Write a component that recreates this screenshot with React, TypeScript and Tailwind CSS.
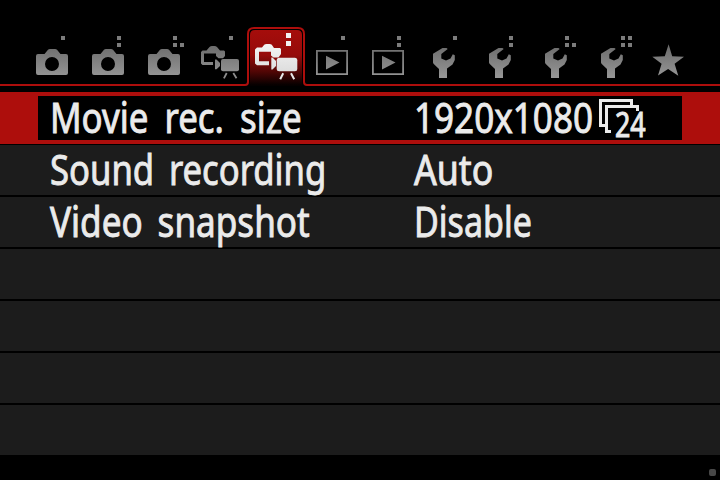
import type { ReactNode } from 'react';

function Camera() {
  return (
    <path
      fillRule="evenodd"
      d="M14 54H20.500L24 49.800Q24.600 49 26 49H31Q32.400 49 33 49.800L36.500 54H42Q44 54 44 56V73Q44 75 42 75H14Q12 75 12 73V56Q12 54 14 54ZM28 57A7 7 0 1 0 28 71A7 7 0 1 0 28 57Z"
    />
  );
}

function MovieCamera() {
  return (
    <>
      <path d="M10.500 50.500H14.500L17.500 47Q18.500 46 20 46H22.500Q24 46 25 47L28 50.500H32L33 51.500V56L31 58.300H26.500L24 56V53.500H12V62H21V65H10.500L9 63.500V52Z" />
      <path d="M23 59.500H24.500L28 63V66L24.500 69.300H23Z" />
      <rect x="29" y="59" width="18" height="12.300" rx="2" />
      <path d="M34.700 73L31.900 78.300M41.300 73L44.500 78.300" stroke="#8d8d8d" strokeWidth="1.800" />
    </>
  );
}

function ActiveMovieCamera() {
  return (
    <>
      <path d="M9 47.500H14L16.200 44.800Q17 44 18.500 44H21.500Q23 44 23.800 44.800L26 48H32L33 49V54L30.500 57.500H25.500L23 55.500V51.700H11V61.300H21V65.300H9L7 63.500V49.500Z" />
      <path d="M23.300 57.500H24.500L28 61V66L24.500 69.500H23.300Z" />
      <rect x="28.700" y="57.700" width="20.600" height="13.600" rx="2.500" />
      <path d="M35.200 73.300L32.200 79.300M43 73.300L46.200 79.300" stroke="#e8e8e8" strokeWidth="2" />
    </>
  );
}

function Play() {
  return (
    <path
      fillRule="evenodd"
      d="M12 50H44V75H12ZM13.800 51.800V73.200H42.200V51.800ZM22 55.700L35.500 62.600L22 69.400Z"
    />
  );
}

function Wrench() {
  return (
    <path d="M26.500 48H30.500L31.700 49L25.300 54V58.500L30 60.500L34.500 58.500L36.800 54.300L38.800 55.300V60L36.500 64.500L31 68.500V78H23V69L17.500 63.800L17 62.500V53.800Z" />
  );
}

function Star() {
  return (
    <path d="M28.600 44.300L32.200 56.200L44 56.700L34.600 63.700L38.300 75.800L28.100 69L18 75.600L21.600 63.700L12.300 56.800L24.800 56.200Z" />
  );
}

const tabs: { icon: ReactNode; dots: number; active?: boolean }[] = [
  { icon: <Camera />, dots: 1 },
  { icon: <Camera />, dots: 2 },
  { icon: <Camera />, dots: 3 },
  { icon: <MovieCamera />, dots: 1 },
  { icon: <ActiveMovieCamera />, dots: 2, active: true },
  { icon: <Play />, dots: 1 },
  { icon: <Play />, dots: 2 },
  { icon: <Wrench />, dots: 1 },
  { icon: <Wrench />, dots: 2 },
  { icon: <Wrench />, dots: 3 },
  { icon: <Wrench />, dots: 4 },
  { icon: <Star />, dots: 0 },
];

// Page markers fill in the order top-left, bottom-left, bottom-right, top-right.
const dotPositions = [
  [37, 36],
  [37, 43],
  [44, 43],
  [44, 36],
];

function TabBar() {
  return (
    <header className="relative h-[86px]">
      <svg className="absolute inset-0" width="720" height="86" viewBox="0 0 720 86">
        <defs>
          <linearGradient id="tabFill" x1="0" y1="30" x2="0" y2="85" gradientUnits="userSpaceOnUse">
            <stop offset="0" stopColor="#a50d0b" />
            <stop offset="0.45" stopColor="#960b0a" />
            <stop offset="0.75" stopColor="#520605" />
            <stop offset="1" stopColor="#060000" />
          </linearGradient>
          <linearGradient id="grey" x1="0" y1="44" x2="0" y2="78" gradientUnits="userSpaceOnUse">
            <stop offset="0" stopColor="#6a6a6a" />
            <stop offset="1" stopColor="#979797" />
          </linearGradient>
          <linearGradient id="white" x1="0" y1="44" x2="0" y2="78" gradientUnits="userSpaceOnUse">
            <stop offset="0" stopColor="#f4f4f4" />
            <stop offset="1" stopColor="#d8d8d8" />
          </linearGradient>
        </defs>
        <path d="M250 86V35Q250 30 255 30H297Q302 30 302 35V86Z" fill="url(#tabFill)" />
        <path
          d="M0 85H245Q248 85 248 82V34Q248 28 254 28H298Q304 28 304 34V82Q304 85 307 85H720"
          fill="none"
          stroke="#ad0e0c"
          strokeWidth="2"
        />
      </svg>
      <nav className="relative flex px-6 pt-5">
        {tabs.map((tab, i) => (
          <svg key={i} className="h-16 w-14" viewBox="0 20 56 64" fill={tab.active ? 'url(#white)' : 'url(#grey)'}>
            {tab.icon}
            {dotPositions.slice(0, tab.dots).map(([x, y], d) =>
              tab.active ? (
                <rect key={d} x="38" y={33 + d * 8} width="5" height="5" fill="#f2f2f2" />
              ) : (
                <rect key={d} x={x} y={y} width="4" height="4" fill="#7c7c7c" />
              ),
            )}
          </svg>
        ))}
      </nav>
    </header>
  );
}

function FrameRate() {
  return (
    <div className="relative h-11 w-12 shrink-0">
      <svg className="size-full" viewBox="598 96 48 44" fill="#ebebeb" shapeRendering="crispEdges">
        <path d="M599 99H633V105H630V102H602V124H605V127H599Z" />
        <path d="M605 105H639V111H636V108H608V130H611V133H605Z" />
      </svg>
      <span className="absolute top-[8px] left-[17px] origin-left scale-x-[0.79] font-['Noto_Sans',sans-serif] text-[34px] leading-[40px] text-[#ebebeb] [-webkit-text-stroke:1px_#ebebeb]">
        24
      </span>
    </div>
  );
}

const textBase =
  "relative -top-[1.5px] inline-block origin-left whitespace-pre font-['Noto_Sans',sans-serif] text-[42px] leading-[50px] text-[#ebebeb] [-webkit-text-stroke:0.9px_#ebebeb]";

const rows = [
  { label: 'Sound recording', labelClass: 'scale-x-[0.825] [word-spacing:7px]', value: 'Auto', valueClass: 'scale-x-[0.85]' },
  { label: 'Video snapshot', labelClass: 'scale-x-[0.835] [word-spacing:7px]', value: 'Disable', valueClass: 'scale-x-[0.81]' },
  { label: '', labelClass: '', value: '', valueClass: '' },
  { label: '', labelClass: '', value: '', valueClass: '' },
  { label: '', labelClass: '', value: '', valueClass: '' },
  { label: '', labelClass: '', value: '', valueClass: '' },
];

export default function App() {
  return (
    <main className="flex h-[480px] w-[720px] flex-col overflow-hidden bg-black">
      <TabBar />
      <section className="mt-1.5 flex flex-col">
        <div className="mb-px h-[52px] bg-[#ad0e0c] px-[38px] py-1">
          <div className="flex h-11 items-center bg-black pl-3">
            <div className="w-[364px] shrink-0">
              <span className={`${textBase} scale-x-[0.83] [word-spacing:8.5px]`}>Movie rec. size</span>
            </div>
            <div className="w-[184px] shrink-0">
              <span className={`${textBase} scale-x-[0.835]`}>1920x1080</span>
            </div>
            <FrameRate />
          </div>
        </div>
        <div className="flex flex-col gap-0.5">
          {rows.map((row, i) => (
            <div key={i} className="flex h-[50px] items-center bg-[#1c1c1c] pl-[50px]">
              <div className="w-[364px] shrink-0">
                <span className={`${textBase} ${row.labelClass}`}>{row.label}</span>
              </div>
              <span className={`${textBase} ${row.valueClass}`}>{row.value}</span>
            </div>
          ))}
        </div>
      </section>
      <footer className="flex flex-1 items-end justify-end pr-1 pb-1">
        <span className="size-[7px] rounded-[2px] bg-[#484848]" />
      </footer>
    </main>
  );
}
